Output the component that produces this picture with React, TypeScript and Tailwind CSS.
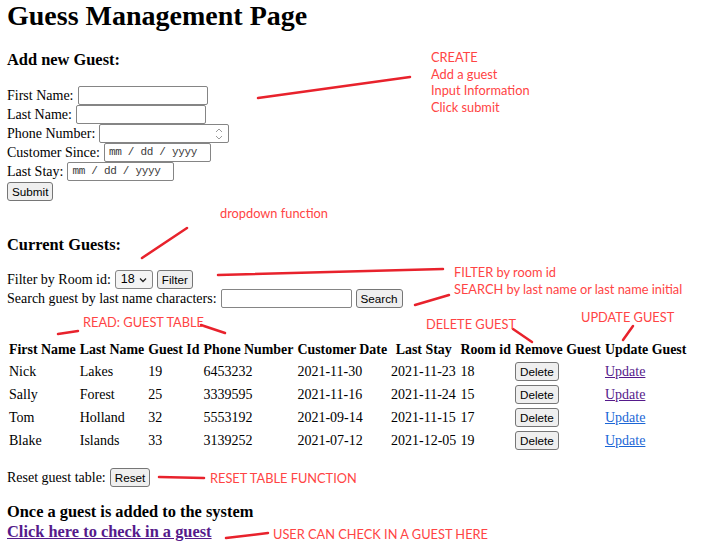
import React from "react"

const btn = "h-[19px] px-[4px] bg-[#efefef] border border-[#767676] rounded-[3px] text-[11.7px] leading-none text-black font-['Liberation_Sans',Arial,sans-serif] flex items-center"
const txtInput = "h-[19px] bg-white border border-[#858585] rounded-[2px]"
const dateInput = "h-[19px] bg-white border border-[#858585] rounded-[2px] flex items-center pl-[4px] text-[11px] text-[#3a3a3a] font-['Liberation_Mono',monospace] tracking-[-0.3px]"
const note = "absolute text-[12.8px] leading-[16.7px] text-[#ff4444] font-['Lato',sans-serif] whitespace-nowrap"

const guests = [
  { first: "Nick", last: "Lakes", id: "19", phone: "6453232", since: "2021-11-30", stay: "2021-11-23", room: "18", visited: true },
  { first: "Sally", last: "Forest", id: "25", phone: "3339595", since: "2021-11-16", stay: "2021-11-24", room: "15", visited: true },
  { first: "Tom", last: "Holland", id: "32", phone: "5553192", since: "2021-09-14", stay: "2021-11-15", room: "17", visited: false },
  { first: "Blake", last: "Islands", id: "33", phone: "3139252", since: "2021-07-12", stay: "2021-12-05", room: "19", visited: false },
]

function Spinner() {
  return (
    <svg width="10" height="14" viewBox="0 0 10 14" className="mr-[4px]">
      <path d="M2 5 L5 2 L8 5" fill="none" stroke="#9a9a9a" strokeWidth="1" />
      <path d="M2 9 L5 12 L8 9" fill="none" stroke="#9a9a9a" strokeWidth="1" />
    </svg>
  )
}

export default function App() {
  return (
    <div className="relative w-[723px] h-[556px] bg-white overflow-hidden text-black font-['Liberation_Serif','Times_New_Roman',serif] text-[14px]">
      <div className="pl-[7px]">
        <h1 className="text-[28px] leading-[32px] font-bold">Guess Management Page</h1>

        <h3 className="mt-[18px] text-[16.4px] leading-[19px] font-bold">Add new Guest:</h3>
        <form className="mt-[17px] flex flex-col">
          <div className="flex items-center h-[19px]">
            <span>First Name:</span>
            <div className={`${txtInput} ml-[4px] w-[130px]`}></div>
          </div>
          <div className="flex items-center h-[19px]">
            <span>Last Name:</span>
            <div className={`${txtInput} ml-[4px] w-[130px]`}></div>
          </div>
          <div className="flex items-center h-[19px]">
            <span>Phone Number:</span>
            <div className={`${txtInput} ml-[4px] w-[130px] flex items-center justify-end`}>
              <Spinner />
            </div>
          </div>
          <div className="flex items-center h-[19px]">
            <span>Customer Since:</span>
            <div className={`${dateInput} ml-[4px] w-[107px]`}>mm / dd / yyyy</div>
          </div>
          <div className="flex items-center h-[19px]">
            <span>Last Stay:</span>
            <div className={`${dateInput} ml-[4px] w-[107px]`}>mm / dd / yyyy</div>
          </div>
          <div className="flex items-center h-[19px] mt-[1px]">
            <button type="button" className={btn}>Submit</button>
          </div>
        </form>

        <h3 className="mt-[34px] text-[16.4px] leading-[19px] font-bold">Current Guests:</h3>
        <div className="mt-[16px] flex items-center h-[19px]">
          <span>Filter by Room id:</span>
          <div className="ml-[4px] h-[19px] w-[38px] bg-[#f4f4f4] border border-[#858585] rounded-[3px] flex items-center justify-between px-[5px] text-[12.5px] font-['Liberation_Sans',Arial,sans-serif]">
            <span>18</span>
            <svg width="8" height="6" viewBox="0 0 8 6"><path d="M1 1.5 L4 4.5 L7 1.5" fill="none" stroke="#222" strokeWidth="1.3" /></svg>
          </div>
          <button type="button" className={`${btn} ml-[4px]`}>Filter</button>
        </div>
        <div className="flex items-center h-[19px]">
          <span>Search guest by last name characters:</span>
          <div className={`${txtInput} ml-[4px] w-[131px]`}></div>
          <button type="button" className={`${btn} ml-[4px]`}>Search</button>
        </div>

        <table className="mt-[31px] border-separate border-spacing-[2px] -ml-[1px]">
          <thead>
            <tr className="font-bold">
              {["First Name", "Last Name", "Guest Id", "Phone Number", "Customer Date", "Last Stay", "Room id", "Remove Guest", "Update Guest"].map((h) => (
                <th key={h} className="px-[1px] py-[1px] text-[13.9px] leading-[16px] whitespace-nowrap text-center font-bold">{h}</th>
              ))}
            </tr>
          </thead>
          <tbody>
            {guests.map((g) => (
              <tr key={g.id}>
                <td className="p-[1px] leading-[16px]">{g.first}</td>
                <td className="p-[1px] leading-[16px]">{g.last}</td>
                <td className="p-[1px] leading-[16px]">{g.id}</td>
                <td className="p-[1px] leading-[16px]">{g.phone}</td>
                <td className="p-[1px] leading-[16px]">{g.since}</td>
                <td className="p-[1px] leading-[16px]">{g.stay}</td>
                <td className="p-[1px] leading-[16px]">{g.room}</td>
                <td className="p-[1px]">
                  <button type="button" className={btn}>Delete</button>
                </td>
                <td className="p-[1px] leading-[16px]">
                  <a href="#" className={g.visited ? "underline text-[#551a8b]" : "underline text-[#1a66d6]"}>Update</a>
                </td>
              </tr>
            ))}
          </tbody>
        </table>

        <div className="mt-[15px] flex items-center h-[19px]">
          <span>Reset guest table:</span>
          <button type="button" className={`${btn} ml-[4px]`}>Reset</button>
        </div>

        <h3 className="mt-[15px] text-[16.4px] leading-[20px] font-bold">Once a guest is added to the system</h3>
        <h3 className="text-[16.4px] leading-[20px] font-bold">
          <a href="#" className="underline text-[#551a8b]">Click here to check in a guest</a>
        </h3>
      </div>

      {/* annotations */}
      <svg className="absolute inset-0 pointer-events-none" width="723" height="556">
        <g stroke="#e8222c" strokeWidth="2.5" strokeLinecap="round" fill="none">
          <line x1="258" y1="98" x2="410" y2="77" />
          <line x1="142" y1="258" x2="187" y2="228" />
          <line x1="218" y1="275" x2="443" y2="269" />
          <line x1="415" y1="305" x2="449" y2="295" />
          <line x1="58" y1="334" x2="78" y2="331" />
          <line x1="201" y1="325" x2="225" y2="333" />
          <line x1="513" y1="329" x2="532" y2="342" />
          <line x1="633" y1="326" x2="623" y2="340" />
          <line x1="159" y1="477" x2="204" y2="478" />
          <line x1="226" y1="538" x2="268" y2="533" />
        </g>
      </svg>
      <div className={`${note} left-[431px] top-[49px]`}>
        <div>CREATE</div>
        <div>Add a guest</div>
        <div>Input Information</div>
        <div>Click submit</div>
      </div>
      <div className={`${note} left-[220px] top-[205px]`}>dropdown function</div>
      <div className={`${note} left-[454px] top-[264px]`}>
        <div>FILTER by room id</div>
        <div>SEARCH by last name or last name initial</div>
      </div>
      <div className={`${note} left-[83px] top-[314px]`}>READ: GUEST TABLE</div>
      <div className={`${note} left-[426px] top-[316px]`}>DELETE GUEST</div>
      <div className={`${note} left-[581px] top-[309px]`}>UPDATE GUEST</div>
      <div className={`${note} left-[210px] top-[470px]`}>RESET TABLE FUNCTION</div>
      <div className={`${note} left-[273px] top-[526px]`}>USER CAN CHECK IN A GUEST HERE</div>
    </div>
  )
}
